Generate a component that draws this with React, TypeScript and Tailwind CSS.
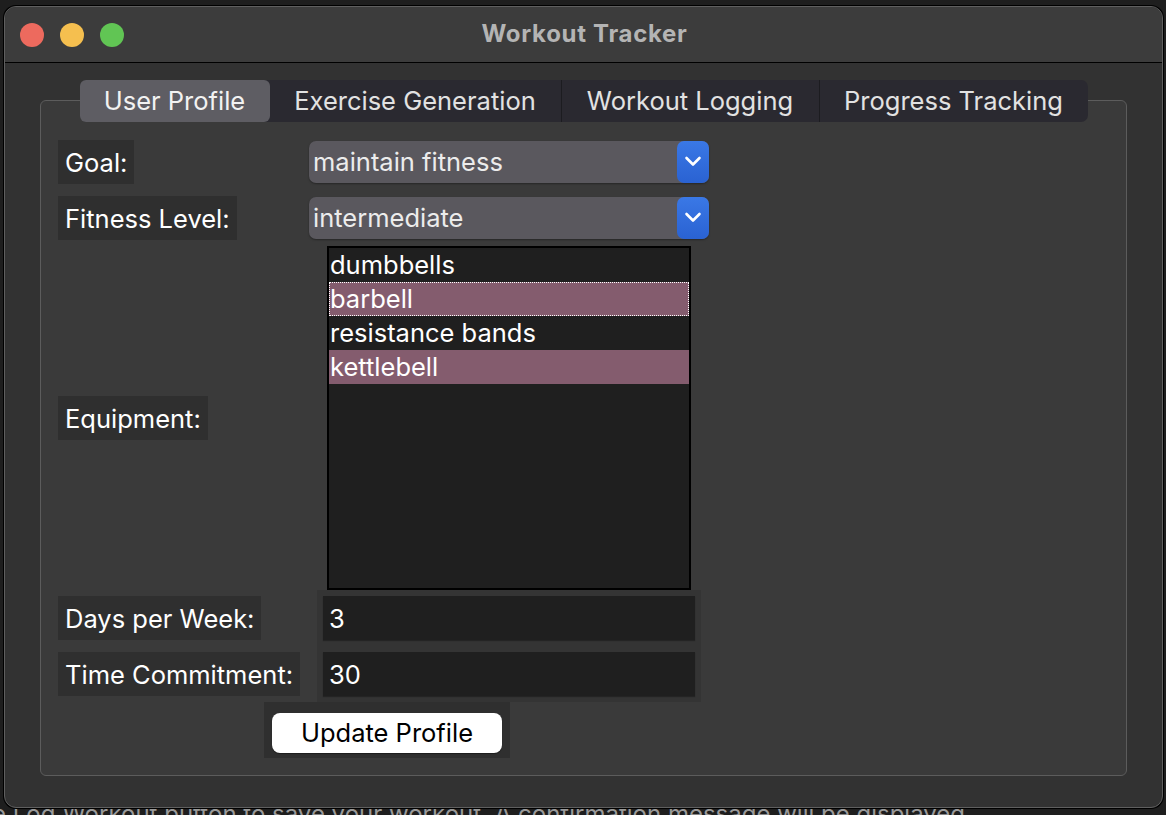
import React from "react";

const font = { fontFamily: "Inter, 'Noto Sans', sans-serif" };

function Chevron() {
  return (
    <svg width="18" height="14" viewBox="0 0 18 14" fill="none">
      <polyline points="2.5,3 9,9.5 15.5,3" stroke="white" strokeWidth="2.6" strokeLinecap="round" strokeLinejoin="round" />
    </svg>
  );
}

function Combo({ value }: { value: string }) {
  return (
    <div className="justify-self-center self-center w-[400px] h-[42px] flex rounded-[7px] bg-[#5a585e] shadow-[0_1px_2px_rgba(0,0,0,0.35)]">
      <div className="flex-1 flex items-center pl-[4px] pt-[1px] text-[25.5px] text-[#ececec]">{value}</div>
      <div className="w-[32px] h-[42px] rounded-[7px] bg-gradient-to-b from-[#3a78e6] to-[#2a62d2] flex items-center justify-center">
        <Chevron />
      </div>
    </div>
  );
}

function Label({ text }: { text: string }) {
  return (
    <div className="justify-self-start self-center h-[44px] px-[7px] pt-[2px] flex items-center bg-[#2f2f2f] text-[25.5px] text-white">
      {text}
    </div>
  );
}

function Entry({ value }: { value: string }) {
  return (
    <div className="justify-self-center w-[384px] h-[56px] p-[6px] bg-[#343434]">
      <div className="w-full h-full bg-[#1f1f1f] flex items-center pl-[6px] pt-[2px] text-[25.5px] text-white shadow-[0_1px_1px_rgba(0,0,0,0.3)]">
        {value}
      </div>
    </div>
  );
}

export default function App() {
  const items = [
    { t: "dumbbells", sel: false, focus: false },
    { t: "barbell", sel: true, focus: true },
    { t: "resistance bands", sel: false, focus: false },
    { t: "kettlebell", sel: true, focus: false },
  ];
  return (
    <div className="w-[1166px] h-[815px] overflow-hidden bg-[#1e1e1e]" style={font}>
      <div className="relative z-10 ml-[4px] mt-[6px] w-[1159px] h-[802px] rounded-[12px] border border-[#5f5f5f] bg-[#323232] overflow-hidden flex flex-col shadow-[0_0_0_1px_#000]">
        {/* title bar */}
        <div className="h-[56px] shrink-0 bg-[#3c3c3c] border-b border-black flex items-center px-[15px] relative">
          <div className="flex gap-[16px]">
            <div className="w-[24px] h-[24px] rounded-full bg-[#ed6a5e]" />
            <div className="w-[24px] h-[24px] rounded-full bg-[#f5bf4f]" />
            <div className="w-[24px] h-[24px] rounded-full bg-[#61c554]" />
          </div>
          <div className="flex-1 text-center text-[24px] tracking-[0.7px] font-bold text-[#b4b4b4] pr-[102px] pb-[2px]">Workout Tracker</div>
        </div>
        {/* content */}
        <div className="flex-1 flex flex-col pt-[17px] px-[35px] pb-[31px]">
          <div className="relative z-10 flex justify-center">
            <div className="flex h-[42px] rounded-[7px] bg-[#2a2930] text-[25.5px]">
              <div className="w-[190px] flex items-center justify-center rounded-[6px] bg-[#5e5d63] text-[#f2f2f2]">User Profile</div>
              <div className="w-[292px] flex items-center justify-center text-[#e2e2e2] border-r border-[#1c1c20]">Exercise Generation</div>
              <div className="w-[258px] flex items-center justify-center text-[#e2e2e2] border-r border-[#1c1c20]">Workout Logging</div>
              <div className="w-[268px] flex items-center justify-center text-[#e2e2e2]">Progress Tracking</div>
            </div>
          </div>
          <div className="flex-1 -mt-[22px] rounded-[6px] border border-[#5c5c5c] bg-[#3a3a3a] pt-[33px] pl-[17px]">
            <div className="grid grid-cols-[244px_414px] grid-rows-[56px_56px_344px_56px_56px_56px]">
              <Label text="Goal:" />
              <Combo value="maintain fitness" />
              <Label text="Fitness Level:" />
              <Combo value="intermediate" />
              <Label text="Equipment:" />
              <div className="justify-self-center w-[364px] h-[344px] border-2 border-black bg-[#1f1f1f] flex flex-col">
                {items.map((it) => (
                  <div
                    key={it.t}
                    className={
                      "h-[34px] flex items-center pl-[1px] text-[25.5px] text-white " +
                      (it.sel ? "bg-[#845c6e] " : "") +
                      (it.focus ? "outline outline-1 outline-dotted outline-white -outline-offset-1" : "")
                    }
                  >
                    {it.t}
                  </div>
                ))}
              </div>
              <Label text="Days per Week:" />
              <Entry value="3" />
              <Label text="Time Commitment:" />
              <Entry value="30" />
              <div className="col-span-2 justify-self-center w-[246px] h-[56px] bg-[#2f2f2f] flex items-center justify-center pt-[6px]">
                <div className="w-[230px] h-[40px] rounded-[8px] bg-white flex items-center justify-center pt-[1px] text-[25.5px] text-black shadow-[0_1px_1px_rgba(0,0,0,0.4)]">
                  Update Profile
                </div>
              </div>
            </div>
          </div>
        </div>
      </div>
      <div className="-mt-[8px] -ml-[8px] whitespace-nowrap text-[24px] leading-[28px] text-[#9a9a9a]">
        e  Log Workout  button to save your workout. A confirmation message will be displayed.
      </div>
    </div>
  );
}
